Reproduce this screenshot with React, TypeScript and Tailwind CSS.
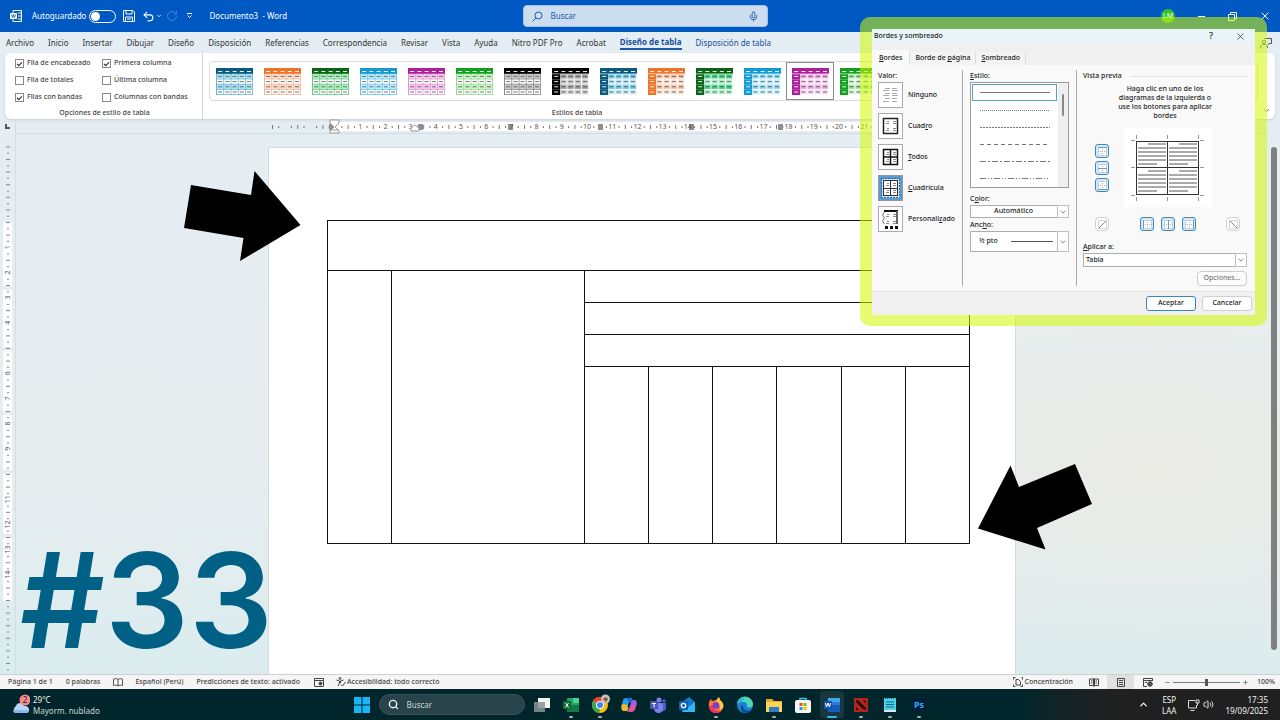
import type { ReactNode } from "react";
import { ChevronDown, ChevronUp, Mic, Minus, Plus, RotateCw, Search, Undo2, Volume2, X } from "lucide-react";

/* ---------- data ---------- */

const ribbonTabs = [
  "Archivo",
  "Inicio",
  "Insertar",
  "Dibujar",
  "Diseño",
  "Disposición",
  "Referencias",
  "Correspondencia",
  "Revisar",
  "Vista",
  "Ayuda",
  "Nitro PDF Pro",
  "Acrobat",
  "Diseño de tabla",
  "Disposición de tabla",
];

const styleOptions = [
  { id: "header-row", label: "Fila de encabezado", on: true },
  { id: "first-col", label: "Primera columna", on: true },
  { id: "total-row", label: "Fila de totales", on: false },
  { id: "last-col", label: "Última columna", on: false },
  { id: "band-rows", label: "Filas con bandas", on: true },
  { id: "band-cols", label: "Columnas con bandas", on: false },
];

type TableStyle = {
  name: string;
  head: string;
  band: string;
  alt: string;
  line: string;
  side?: boolean;
  selected?: boolean;
};

const tableStyles: TableStyle[] = [
  { name: "Cuadrícula azul oscuro", head: "#0b5a7e", band: "#b5e3f2", alt: "#ffffff", line: "#62b8d4" },
  { name: "Cuadrícula naranja", head: "#f07427", band: "#fbe0d0", alt: "#ffffff", line: "#f3b592" },
  { name: "Cuadrícula verde oscuro", head: "#0a6414", band: "#b9f0c6", alt: "#ffffff", line: "#5fca80" },
  { name: "Cuadrícula celeste", head: "#129bd3", band: "#c5ecfa", alt: "#ffffff", line: "#63c6e8" },
  { name: "Cuadrícula magenta", head: "#ad1f98", band: "#f6cdef", alt: "#ffffff", line: "#e593d9" },
  { name: "Cuadrícula verde", head: "#10a01c", band: "#d3f4d1", alt: "#ffffff", line: "#8edb8d" },
  { name: "Cuadrícula negra", head: "#000000", band: "#cccccc", alt: "#ffffff", line: "#8a8a8a" },
  { name: "Oscura negra", head: "#000000", band: "#a6a6a6", alt: "#cfcfcf", line: "#ffffff", side: true },
  { name: "Oscura azul", head: "#0b5a7e", band: "#79cde8", alt: "#bfe6f3", line: "#ffffff", side: true },
  { name: "Oscura naranja", head: "#f07427", band: "#f8c5a8", alt: "#fbe2d5", line: "#ffffff", side: true },
  { name: "Oscura verde", head: "#0a6414", band: "#4fd88c", alt: "#b3efcd", line: "#ffffff", side: true },
  { name: "Oscura celeste", head: "#129bd3", band: "#93dcf7", alt: "#c9eefb", line: "#ffffff", side: true },
  { name: "Oscura magenta", head: "#ad1f98", band: "#eeb0e4", alt: "#f7d7f2", line: "#ffffff", side: true, selected: true },
  { name: "Oscura verde claro", head: "#10a01c", band: "#a5e6a3", alt: "#d2f2d1", line: "#ffffff", side: true },
];

const dashes = ["", "1 1", "2 1", "4 3", "6 2 2 2", "6 2 1 2 1 2"];

/* ---------- small drawings ---------- */

function TableThumb({ style }: { style: TableStyle }) {
  const rows = [0, 1, 2, 3, 4];
  return (
    <svg width="37" height="27" viewBox="0 0 37 27" aria-hidden="true">
      <rect width="37" height="27" fill={style.line} />
      {rows.map((r) =>
        rows.map((c) => {
          const header = r === 0 || (style.side && c === 0);
          const fill = header ? style.head : r % 2 ? style.band : style.alt;
          const x = 1 + c * 7.2;
          const y = r === 0 ? 0 : 1 + r * 5.2;
          return (
            <g key={`${r}-${c}`}>
              <rect
                x={header ? x - 1 : x}
                y={y}
                width={header ? 8.2 : 6.4}
                height={r === 0 ? 5.6 : header ? 5.2 : 4.4}
                fill={fill}
              />
              <rect
                x={x + 1.2}
                y={r === 0 ? 3 : y + 1.7}
                width="4"
                height="1"
                fill={header ? "#fff" : "#444"}
                fillOpacity={header ? 0.9 : 0.75}
              />
            </g>
          );
        }),
      )}
    </svg>
  );
}

function HorizontalRuler() {
  const cm = 25.2;
  const zero = 67;
  const numbers = Array.from({ length: 21 }, (_, i) => i + 1);
  const ticks = Array.from({ length: 104 }, (_, i) => i - 10);
  const stops = [64, 153, 243, 333, 424, 513];
  return (
    <svg className="block w-full overflow-visible" height="14" viewBox="0 0 748 14" aria-hidden="true">
      <rect x={zero} y="3" width="645" height="9" fill="#fff" />
      {ticks.map((t) => {
        if (t % 4 === 0) return null;
        const x = zero + (t * cm) / 4;
        const half = t % 2 === 0;
        return <rect key={t} x={x} y={half ? 6 : 7} width="1" height={half ? 4 : 2} fill="#777" />;
      })}
      {stops.map((x) => (
        <rect key={x} x={x - 3} y="5" width="5" height="6" fill="#8a9095" />
      ))}
      {numbers.map((n) => (
        <text key={n} x={zero + n * cm} y="10" textAnchor="middle" fontSize="7" fill="#555">
          {n}
        </text>
      ))}
      <path d="M62 1h9v3l-4 4 4 4v2h-9v-2l4-4-4-4zM62 11h9" fill="#fff" stroke="#999" />
      <path d="M143 12v-3l4-3 4 3v3z" fill="#fff" stroke="#999" />
    </svg>
  );
}

function VerticalRuler() {
  const cm = 25.2;
  const zero = 88;
  const ticks = Array.from({ length: 84 }, (_, i) => i - 12);
  const numbers = [1, 2, 3, 4, 6, 7, 8, 9, 11, 12, 13, 14];
  return (
    <svg className="block" width="15" height="541" viewBox="0 0 15 541" aria-hidden="true">
      <rect x="3" y={zero} width="9" height="379" fill="#fff" />
      {[152, 213, 277, 336, 400].map((y) => (
        <rect key={y} x="3" y={y} width="9" height="4" fill="#e9ecee" />
      ))}
      {ticks.map((t) => {
        if (t > 0 && t % 4 === 0 && numbers.includes(t / 4)) return null;
        const half = t % 2 === 0;
        return <rect key={t} x={half ? 6 : 7} y={zero + (t * cm) / 4} width={half ? 4 : 2} height="1" fill="#888" />;
      })}
      {numbers.map((n) => (
        <text
          key={n}
          transform={`translate(10 ${zero + n * cm}) rotate(-90)`}
          textAnchor="middle"
          fontSize="7"
          fill="#555"
        >
          {n}
        </text>
      ))}
    </svg>
  );
}

function PreviewDiagram() {
  const lines = [2, 6, 10, 14, 18, 22];
  const block = (x: number, y: number) =>
    lines.map((l, i) => (
      <rect
        key={`${x}-${y}-${l}`}
        x={i === 0 ? x + 10 : x}
        y={y + l}
        width={i === 0 ? 18 : i === 5 ? 19 : 28}
        height="2"
        fill="#aaa"
      />
    ));
  return (
    <svg width="88" height="79" viewBox="0 0 88 79" className="bg-white" aria-hidden="true" shapeRendering="crispEdges">
      {block(14, 13)}
      {block(45, 13)}
      {block(14, 40)}
      {block(45, 40)}
      <path d="M12.5 13v54M43.5 13v54M74.5 13v54M12 13.5h63M12 39.5h63M12 66.5h63" stroke="#333" fill="none" />
      <path
        d="M7 12.500h4M12.500 7v4M43.500 7v4M74.500 7v4M76 12.500h4M7 39.500h4M76 39.500h4M7 67.500h4M12.500 69v4M43.500 69v4M74.500 69v4M76 67.500h4"
        stroke="#999"
        fill="none"
      />
    </svg>
  );
}

function SettingIcon({ kind }: { kind: string }) {
  const bare = kind === "none";
  return (
    <svg width="19" height="20" viewBox="0 0 19 20" aria-hidden="true" shapeRendering="crispEdges">
      {kind === "grid" && (
        <rect x="0.500" y="0.500" width="18" height="19" fill="#cfe3f3" stroke="#2b6fae" strokeDasharray="2 1" />
      )}
      {!bare && <rect x="2" y="2" width="15" height="16" fill="#fff" />}
      <path
        d={
          bare
            ? "M4 3.500h5M11 3.500h5M2 5.500h6M11 5.500h6M4 8.500h5M11 8.500h5M2 10.500h6M11 10.500h6M4 13.500h5M11 13.500h5M2 16.500h6M11 16.500h5"
            : "M6 5.500h2M12 5.500h3M5 7.500h3M12 7.500h3M6 12.500h2M12 12.500h3M5 14.500h3M12 14.500h3"
        }
        stroke={bare ? "#aaa" : "#888"}
        fill="none"
      />
      {kind === "box" && <rect x="2.500" y="2.500" width="14" height="15" fill="none" stroke="#222" strokeWidth="1.500" shapeRendering="auto" />}
      {kind === "all" && (
        <path d="M2.500 2.500h14v15h-14zM9.500 2.500v15M2.500 10h14" fill="none" stroke="#111" strokeWidth="1.500" shapeRendering="auto" />
      )}
      {kind === "grid" && <path d="M2.500 2.500h14v15h-14zM9.500 2v16M2 10.500h15" fill="none" stroke="#333" />}
      {kind === "custom" && (
        <>
          <path d="M3 2h14" stroke="#111" strokeWidth="2" />
          <path d="M16 2v13" stroke="#666" strokeWidth="2" />
          <path d="M3.500 3l-2 3 2 3-2 3 2 3" stroke="#777" fill="none" shapeRendering="auto" />
          <path d="M4 18h13" stroke="#111" strokeWidth="3" strokeDasharray="3 2" />
        </>
      )}
    </svg>
  );
}

function BorderGlyph({ edge }: { edge: string }) {
  const strong: Record<string, string> = {
    top: "M2 2.500h9",
    middle: "M2 6.500h9",
    bottom: "M2 10.500h9",
    left: "M2.500 2v9",
    center: "M6.500 2v9",
    right: "M10.500 2v9",
    up: "M3 10L10 3",
    down: "M3 3L10 10",
  };
  const diagonal = edge === "up" || edge === "down";
  return (
    <svg width="13" height="13" viewBox="0 0 13 13" aria-hidden="true">
      <path
        d={diagonal ? "M2.500 2.500h8v8h-8z" : "M2.500 2.500h8v8h-8zM6.500 2v9M2 6.500h9"}
        fill="#fff"
        stroke="#9fb4c4"
        strokeDasharray="1 1"
      />
      <path d={strong[edge]} stroke={diagonal ? "#888" : "#6d9cbd"} fill="none" />
    </svg>
  );
}

/* ---------- window parts ---------- */

function TitleBar() {
  return (
    <header className="grid h-8 shrink-0 grid-cols-[1fr_auto_1fr] items-center bg-[#0058c3] pl-[10px] text-white">
      <div className="flex items-center">
        <svg width="12" height="12" viewBox="0 0 12 12" aria-label="Word">
          <path d="M3 .5h8.500v11H3z" fill="none" stroke="#fff" />
          <path d="M8 3h3M8 6h3M8 9h3" stroke="#fff" />
          <rect y="3" width="7" height="6" fill="#fff" />
          <path d="M1.500 4.500l1 3 1-3 1 3 1-3" stroke="#0058c3" fill="none" strokeWidth=".8" />
        </svg>
        <label htmlFor="autosave" className="ml-[10px] whitespace-nowrap text-[8px]">
          Autoguardado
        </label>
        <input
          id="autosave"
          type="checkbox"
          role="switch"
          className="ml-[3px] h-[13px] w-[27px] appearance-none rounded-full border border-white before:m-px before:block before:size-[9px] before:rounded-full before:bg-white"
        />
        <button aria-label="Guardar" className="ml-[7px]">
          <svg width="12" height="12" viewBox="0 0 12 12" fill="none" stroke="#fff">
            <path d="M.5.5h9.500l1.500 1.500v9.500H.5zM3 .5v3.500h6V.5M2.500 11.500V7h7v4.500M4 9h4" />
          </svg>
        </button>
        <button aria-label="Deshacer" className="ml-[7px] flex items-center gap-px">
          <Undo2 size={13} strokeWidth={2} />
          <ChevronDown size={6} strokeWidth={3} />
        </button>
        <button aria-label="Rehacer" className="ml-1 text-[#3f82d8]">
          <RotateCw size={12} />
        </button>
        <button aria-label="Personalizar" className="ml-2">
          <svg width="7" height="6" viewBox="0 0 7 6" fill="none" stroke="#fff">
            <path d="M1 .5h5M1.500 2.500l2 2 2-2" />
          </svg>
        </button>
        <span className="ml-4 whitespace-pre text-[8px]">Documento3  - Word</span>
      </div>
      <label className="flex h-[22px] w-[245px] items-center gap-2 rounded-sm border border-[#a9c3e6] bg-[#cdddf0] px-2 text-[#1d5aa8]">
        <svg width="11" height="11" viewBox="0 0 11 11" fill="none" stroke="currentColor">
          <circle cx="6.500" cy="4.500" r="3.500" />
          <path d="M4 7L.5 10.500" />
        </svg>
        <input
          aria-label="Buscar"
          placeholder="Buscar"
          className="min-w-0 flex-1 bg-transparent text-[8px] outline-none placeholder:text-[#1d5aa8]"
        />
        <Mic size={11} />
      </label>
      <div className="flex items-center justify-end pr-[9px]">
        <span className="grid size-[14px] place-items-center rounded-full bg-[#2fc12f] text-[7px]">LM</span>
        <button aria-label="Minimizar" className="ml-[21px]">
          <Minus size={11} />
        </button>
        <button aria-label="Restaurar" className="ml-5">
          <svg width="11" height="11" viewBox="0 0 11 11" fill="none" stroke="#fff">
            <path d="M1.500 3.500h6v6h-6zM3.500 3V1.500h6v6H8" />
          </svg>
        </button>
        <button aria-label="Cerrar" className="ml-[21px]">
          <X size={12} />
        </button>
      </div>
    </header>
  );
}

function RibbonTabs() {
  return (
    <nav className="flex h-[21px] shrink-0 items-center gap-[14px] whitespace-nowrap pl-[6px] pr-2 text-[8px] text-[#333]">
      {ribbonTabs.map((tab) => {
        if (tab === "Diseño de tabla")
          return (
            <button key={tab} className="border-b-2 border-[#1d57a6] font-bold leading-3 text-[#174f9f]">
              {tab}
            </button>
          );
        return (
          <button key={tab} className={tab === "Disposición de tabla" ? "text-[#174f9f]" : ""}>
            {tab}
          </button>
        );
      })}
      <svg width="12" height="11" viewBox="0 0 12 11" className="ml-auto" fill="none" stroke="#555">
        <circle cx="4" cy="5" r="1.700" />
        <path d="M.5 11c0-5 7-5 7 0M4 1.500h7.500v5H9L8 8" />
      </svg>
    </nav>
  );
}

function Ribbon() {
  return (
    <section className="mx-[5px] flex h-[66px] shrink-0 rounded-md bg-white text-[7px] font-medium text-[#444] shadow">
      <div className="flex w-[198px] shrink-0 flex-col justify-between border-r border-[#d5d5d5] pb-px pl-[10px] pt-[2px]">
        <div className="grid grid-cols-[87px_1fr]">
          {styleOptions.map((o) => (
            <label key={o.id} htmlFor={o.id} className="flex h-[17px] items-center gap-[3px] whitespace-nowrap">
              <input
                id={o.id}
                type="checkbox"
                defaultChecked={o.on}
                className="grid size-[9px] shrink-0 appearance-none place-items-center border border-[#888] bg-white text-[8px] leading-none checked:before:block checked:before:h-[3px] checked:before:w-[5px] checked:before:-rotate-45 checked:before:border-b checked:before:border-l checked:before:border-[#222]"
              />
              {o.label}
            </label>
          ))}
        </div>
        <p className="pr-2 text-center leading-[11px]">Opciones de estilo de tabla</p>
      </div>
      <div className="flex min-w-0 flex-1 flex-col justify-between pb-px pl-[6px] pt-2">
        <div className="flex h-10 overflow-hidden rounded-sm border border-[#dcdcdc]">
          {tableStyles.map((s) => (
            <button
              key={s.name}
              aria-label={s.name}
              className={
                s.selected
                  ? "grid w-12 shrink-0 place-items-center border border-[#8c8c8c]"
                  : "grid w-12 shrink-0 place-items-center"
              }
            >
              <TableThumb style={s} />
            </button>
          ))}
        </div>
        <p className="w-[736px] text-center leading-[11px]">Estilos de tabla</p>
      </div>
      <button aria-label="Contraer la cinta" className="self-end p-1 text-[#444]">
        <ChevronDown size={9} />
      </button>
    </section>
  );
}

function DocumentTable() {
  const cell = "border border-[#111]";
  return (
    <table className="w-full table-fixed border-collapse">
      <colgroup>
        <col className="w-[10%]" />
        <col className="w-[30%]" />
        <col span={6} className="w-[10%]" />
      </colgroup>
      <tbody>
        <tr className="h-[50px]">
          <td colSpan={8} className={cell} />
        </tr>
        <tr className="h-8">
          <td rowSpan={4} className={cell} />
          <td rowSpan={4} className={cell} />
          <td colSpan={6} className={cell} />
        </tr>
        <tr className="h-8">
          <td colSpan={6} className={cell} />
        </tr>
        <tr className="h-8">
          <td colSpan={6} className={cell} />
        </tr>
        <tr className="h-[177px]">
          {[1, 2, 3, 4, 5, 6].map((c) => (
            <td key={c} className={cell} />
          ))}
        </tr>
      </tbody>
    </table>
  );
}

function Workspace() {
  return (
    <main className="flex min-h-0 flex-1 overflow-hidden">
      <div className="w-4 shrink-0 border-r border-[#d3dde3]">
        <div className="flex h-[15px] items-center justify-center">
          <svg width="5" height="5" viewBox="0 0 5 5">
            <path d="M1 0v4h4" stroke="#555" strokeWidth="2" fill="none" />
          </svg>
        </div>
        <VerticalRuler />
      </div>
      <div className="min-w-0 flex-1">
        <div className="h-[15px] border-b border-[#d3dde3]">
          <div className="mx-auto w-[748px]">
            <HorizontalRuler />
          </div>
        </div>
        <article className="mx-auto mt-[13px] h-full w-[748px] border border-[#d5dcdf] bg-white pl-[58px] pt-[72px]">
          <div className="w-[643px]">
            <DocumentTable />
          </div>
        </article>
      </div>
      <div className="w-3 shrink-0 px-[3px] pb-6 pt-7">
        <div className="h-full rounded-full bg-[#808080]" />
      </div>
    </main>
  );
}

function StatusBar() {
  return (
    <footer className="flex h-[15px] shrink-0 items-center border-t border-[#d0d0d0] bg-[#f5f5f5] pl-2 pr-[5px] text-[7px] font-medium text-[#444]">
      <span>Página 1 de 1</span>
      <span className="ml-[13px]">0 palabras</span>
      <svg width="10" height="9" viewBox="0 0 10 9" className="ml-[13px]" fill="none" stroke="#555">
        <path d="M5 1.500C4 .5 2 .5.500 1v6.500C2 7 4 7 5 8c1-1 3-1 4.500-.5V1C8 .5 6 .5 5 1.500zV8" />
      </svg>
      <span className="ml-3">Español (Perú)</span>
      <span className="ml-[13px]">Predicciones de texto: activado</span>
      <svg width="10" height="9" viewBox="0 0 10 9" className="ml-[14px]" fill="none" stroke="#444">
        <path d="M.5.500h9v8h-9zM.500 2.500h9" />
        <circle cx="6.500" cy="5.500" r="1.500" fill="#444" />
      </svg>
      <svg width="10" height="10" viewBox="0 0 10 10" className="ml-3" fill="none" stroke="#444">
        <circle cx="4" cy="1.500" r="1" />
        <path d="M.500 3l3 1v2l-1.500 3M7.500 3l-3 1v2M5 7.500l1.500 1.500 3-4" />
      </svg>
      <span className="ml-px">Accesibilidad: todo correcto</span>

      <button className="ml-auto flex items-center gap-[2px]">
        <svg width="10" height="10" viewBox="0 0 10 10" fill="none" stroke="#444">
          <path d="M.500 2.500v-2h2M.500 7.500v2h2M9.500 7.500v2h-2M9.500 2.500v-2h-1M3 2.500h2.500l2 2v3.500H3z" />
        </svg>
        Concentración
      </button>
      <button aria-label="Modo lectura" className="ml-[10px] grid h-[14px] w-[22px] place-items-center">
        <svg width="10" height="9" viewBox="0 0 10 9" fill="none" stroke="#444">
          <path d="M.500 1h4v6.500h-4zM5.500 1h4v6.500h-4zM2 3h1.500M2 5h1.500M6.500 3H8M6.500 5H8M5 0v9" />
        </svg>
      </button>
      <button aria-label="Diseño de impresión" className="ml-[2px] grid h-[14px] w-[27px] place-items-center bg-[#e0e0e0]">
        <svg width="8" height="9" viewBox="0 0 8 9" fill="none" stroke="#444">
          <path d="M.500.500h7v8h-7zM2 2.500h4M2 4.500h4M2 6.500h4" />
        </svg>
      </button>
      <button aria-label="Diseño web" className="grid h-[14px] w-[27px] place-items-center">
        <svg width="10" height="9" viewBox="0 0 10 9" fill="none" stroke="#444">
          <path d="M4 8.500H.500v-8h9V3M.500 2.500h9M2 4.500h2" />
          <circle cx="7" cy="6" r="2.300" fill="#555" />
        </svg>
      </button>
      <button aria-label="Alejar" className="ml-[3px] text-[#555]">
        <Minus size={7} />
      </button>
      <input
        type="range"
        aria-label="Zoom"
        defaultValue={50}
        className="mx-[2px] h-px w-[67px] appearance-none bg-[#777] [&::-webkit-slider-thumb]:h-[7px] [&::-webkit-slider-thumb]:w-[3px] [&::-webkit-slider-thumb]:appearance-none [&::-webkit-slider-thumb]:bg-[#555]"
      />
      <button aria-label="Acercar" className="text-[#555]">
        <Plus size={7} />
      </button>
      <span className="ml-2">100%</span>
    </footer>
  );
}

/* ---------- taskbar ---------- */

type TaskApp = { name: string; mark?: "dot" | "active"; art: ReactNode };

const apps: TaskApp[] = [
  {
    name: "Vista de tareas",
    art: (
      <>
        <rect x="4" y="1" width="12" height="10" fill="#f4f4f4" />
        <rect x="0" y="5" width="11" height="10" fill="#8a9496" fillOpacity=".85" />
      </>
    ),
  },
  {
    name: "Excel",
    mark: "dot",
    art: (
      <>
        <rect x="4" y="1" width="12" height="14" rx="1" fill="#21a366" />
        <path d="M10 1h6v5h-6z" fill="#4fd08c" />
        <path d="M4 8h12v7H4z" fill="#107c41" />
        <rect x="0" y="4" width="8" height="8" rx="1" fill="#0e6b38" />
        <path d="M2.500 6l3 4.500M5.500 6l-3 4.500" stroke="#fff" />
      </>
    ),
  },
  {
    name: "Chrome",
    mark: "dot",
    art: (
      <>
        <circle cx="8" cy="8" r="8" fill="#fbbc05" />
        <path d="M8 8L1 4a8 8 0 0 1 14 0z" fill="#ea4335" />
        <path d="M8 8L1 4a8 8 0 0 0 6.500 12z" fill="#34a853" />
        <circle cx="8" cy="8" r="4" fill="#fff" />
        <circle cx="8" cy="8" r="3" fill="#4285f4" />
        <circle cx="13.500" cy="2" r="4.500" fill="#c9c1b5" />
        <path d="M11 2c1-2 4-2 5 0l-2 3z" fill="#7b5a4c" />
      </>
    ),
  },
  {
    name: "Copilot",
    art: (
      <>
        <path d="M5 1h6l-4 13H3c-3 0-3-4-2-7 1-3 1-6 4-6z" fill="#2a9df4" />
        <path d="M1 7c-1 3-1 7 2 7h3l2-6z" fill="#f2b632" />
        <path d="M11 3h2c3 0 3 4 2 6.500S14 15 10 15H5c2 0 3-1 3-3z" fill="#e8529a" />
        <path d="M11 3h2c3 0 3 3 2 6h-5z" fill="#a85be8" />
        <path d="M5 1h5l2 2-1 2H8z" fill="#1c67d8" />
        <path d="M8 5l1.500 1L8 11l-1.500-1z" fill="#00262b" />
      </>
    ),
  },
  {
    name: "Teams",
    art: (
      <>
        <circle cx="9" cy="3" r="2.500" fill="#7b83eb" />
        <circle cx="14" cy="4" r="1.700" fill="#5059c9" />
        <path d="M11 6h5v5a3 3 0 0 1-4 3z" fill="#5059c9" />
        <path d="M4 6h9v6a4.500 4 0 0 1-9 0z" fill="#7b83eb" />
        <rect x="0" y="4" width="8" height="8" rx="1" fill="#4b53bc" />
        <path d="M2 6.500h4M4 6.500v4" stroke="#fff" />
      </>
    ),
  },
  {
    name: "Outlook",
    art: (
      <>
        <path d="M3 5l7-5 6 5v9a1 1 0 0 1-1 1H3z" fill="#1279cf" />
        <path d="M16 5v9a1 1 0 0 1-1 1H3z" fill="#35b8f1" />
        <rect x="0" y="4" width="9" height="9" rx="1" fill="#0a5fb4" />
        <circle cx="4.500" cy="8.500" r="2.200" fill="none" stroke="#fff" strokeWidth="1.300" />
      </>
    ),
  },
  {
    name: "Firefox",
    mark: "dot",
    art: (
      <>
        <path d="M1 5l2-3 1 2 4-1 3-3 1 3c3 2 4 5 3 8-1 3-4 5-7 5-5 0-8-4-7-11z" fill="#ff7139" />
        <path d="M11 0l1 3c3 2 4 5 3 8l-3 2c1-4-2-8-4-9z" fill="#ffc93c" />
        <path d="M1 10c1 4 4 6 7 6 2 0 4-1 5-2-5 1-8-2-8-6z" fill="#ef2f68" />
        <circle cx="8" cy="8.500" r="3.300" fill="#7543c9" />
      </>
    ),
  },
  {
    name: "Edge",
    art: (
      <>
        <circle cx="8" cy="8" r="8" fill="#1b7fd4" />
        <path d="M0 8a8 8 0 0 1 16-1c0 3-3 4-6 3 1-3-1-5-4-5-3 0-6 1-6 3z" fill="#4fd8b4" />
        <path d="M0 8c0-4 3-7 8-8L5 5C2 5 0 6 0 8z" fill="#2bb6e8" />
        <path d="M6 8c-1 4 4 7 8 5-2 3-6 3-8 2-3-2-3-6 0-7z" fill="#0c4a94" />
      </>
    ),
  },
  {
    name: "Explorador",
    mark: "dot",
    art: (
      <>
        <path d="M0 2h6l2 2h8v11H0z" fill="#e9a825" />
        <path d="M0 5h16v10H0z" fill="#fdd35a" />
        <path d="M3 10h10v5H3z" fill="#2c7cc9" />
      </>
    ),
  },
  {
    name: "Store",
    art: (
      <>
        <path d="M5 4V1.500h6V4" stroke="#3fc0e8" strokeWidth="1.500" fill="none" />
        <rect x="0" y="3" width="16" height="13" rx="2" fill="#f5f5f5" />
        <path d="M4.500 6h3v3h-3z" fill="#f25022" />
        <path d="M8.500 6h3v3h-3z" fill="#7fba00" />
        <path d="M4.500 10h3v3h-3z" fill="#00a4ef" />
        <path d="M8.500 10h3v3h-3z" fill="#ffb900" />
      </>
    ),
  },
  {
    name: "Word",
    mark: "active",
    art: (
      <>
        <path d="M4 1h12v5H4z" fill="#41a5ee" />
        <path d="M4 5h12v4H4z" fill="#2b7cd3" />
        <path d="M4 8h12v7H4z" fill="#185abd" />
        <rect x="0" y="4" width="8" height="8" rx="1" fill="#1552b0" />
        <path d="M1.500 6l1 4 1.500-4 1.500 4 1-4" stroke="#fff" fill="none" />
      </>
    ),
  },
  {
    name: "Dota 2",
    mark: "dot",
    art: (
      <>
        <path d="M1 1h14v14H1z" fill="#b3241c" />
        <path d="M3 3l3 1 7 7v2l-3-1-7-7zM10 3l3 1-1 2zM3 10l3 3H3z" fill="#210b0b" />
      </>
    ),
  },
  {
    name: "Bloc de notas",
    mark: "dot",
    art: (
      <>
        <path d="M2 1h12v14H2z" fill="#4ed0e8" />
        <path d="M2 13h12v2H2z" fill="#d7e9ee" />
        <path d="M4 5h8M4 7.500h8M4 10h8" stroke="#0d6b86" />
        <path d="M3 1.500h10" stroke="#0d6b86" strokeDasharray="1 1" />
      </>
    ),
  },
  {
    name: "Photoshop",
    mark: "dot",
    art: (
      <>
        <rect x="1" y="1" width="14" height="14" rx="2" fill="#001e36" />
        <text x="8" y="11" textAnchor="middle" fontSize="9" fontWeight="700" fill="#31a8ff">
          Ps
        </text>
      </>
    ),
  },
];

function Taskbar() {
  return (
    <footer className="grid h-[31px] shrink-0 grid-cols-[1fr_auto_1fr] items-center bg-linear-to-r from-[#00262b] from-80% to-[#202020] to-87% px-3 text-[8px] text-[#f2f2f2]">
      <button className="flex items-center gap-[3px] justify-self-start text-left">
        <svg width="18" height="21" viewBox="0 0 18 21" aria-hidden="true">
          <path d="M4 19a4 4 0 0 1 0-7c1-4 7-4 8 0 5-1 7 5 3 7z" fill="#b9d4f5" />
          <path d="M1 16h16c0 2-1 3-2 3H4c-2 0-3-1-3-3z" fill="#8db4ec" />
          <circle cx="13" cy="6" r="5.500" fill="#f58a8a" />
          <text x="13" y="9" textAnchor="middle" fontSize="8" fill="#222">
            2
          </text>
        </svg>
        <span className="leading-[11px]">
          29°C
          <br />
          <span className="text-[#cfd6d6]">Mayorm. nublado</span>
        </span>
      </button>
      <div className="flex items-center gap-[5px]">
        <button aria-label="Inicio" className="grid size-6 place-items-center">
          <svg width="16" height="16" viewBox="0 0 16 16" fill="#19b5f5">
            <path d="M0 0h7.500v7.500H0zM8.500 0H16v7.500H8.500zM0 8.500h7.500V16H0zM8.500 8.500H16V16H8.500z" />
          </svg>
        </button>
        <label className="flex h-[21px] w-[146px] items-center gap-2 rounded-full border border-[#3c5357] bg-[#26444a] px-2">
          <Search size={11} strokeWidth={3} />
          <input
            aria-label="Buscar en Windows"
            placeholder="Buscar"
            className="min-w-0 flex-1 bg-transparent text-[8px] outline-none placeholder:text-[#cfd8d8]"
          />
        </label>
        {apps.map((app) => (
          <button
            key={app.name}
            aria-label={app.name}
            className={
              app.mark === "active"
                ? "flex h-[27px] w-6 flex-col items-center justify-end gap-[3px] rounded-sm bg-[#15393e]"
                : "flex h-[27px] w-6 flex-col items-center justify-end gap-[3px]"
            }
          >
            <svg width="16" height="16" viewBox="0 0 16 16" className="overflow-visible">
              {app.art}
            </svg>
            <span
              className={
                app.mark === "active"
                  ? "h-[2px] w-[10px] rounded-full bg-[#3bb4ea]"
                  : app.mark === "dot"
                    ? "h-[2px] w-1 rounded-full bg-[#a5b0b1]"
                    : "h-[2px] w-1"
              }
            />
          </button>
        ))}
      </div>
      <div className="flex items-center justify-end">
        <ChevronUp size={11} strokeWidth={3} />
        <span className="ml-[13px] text-center leading-[11px]">
          ESP
          <br />
          LAA
        </span>
        <svg width="12" height="12" viewBox="0 0 12 12" className="ml-3" fill="none" stroke="#ddd">
          <path d="M7 1.500H.500v7.500h8V6M2.500 11.500h4M8 1h3v3H8zM9.500 4v2.500" />
        </svg>
        <Volume2 size={11} className="ml-[3px]" />
        <span className="ml-[11px] text-right leading-[11px]">
          17:35
          <br />
          19/09/2025
        </span>
      </div>
    </footer>
  );
}

/* ---------- borders dialog ---------- */

const settings: { kind: string; label: ReactNode }[] = [
  { kind: "none", label: <>Nin<u>g</u>uno</> },
  { kind: "box", label: <>Cuad<u>r</u>o</> },
  { kind: "all", label: <><u>T</u>odos</> },
  { kind: "grid", label: <><u>C</u>uadrícula</> },
  { kind: "custom", label: <>Personali<u>z</u>ado</> },
];

function EdgeButton({ edge, plain }: { edge: string; plain?: boolean }) {
  return (
    <button
      aria-label={`Borde ${edge}`}
      className={
        plain
          ? "grid size-[14px] place-items-center rounded-sm border border-[#d0d0d0] bg-[#fdfdfd]"
          : "grid size-[14px] place-items-center rounded-[3px] border border-[#3d87ba] bg-[#d5e9f7]"
      }
    >
      <BorderGlyph edge={edge} />
    </button>
  );
}

function SelectArrow() {
  return (
    <span className="pointer-events-none absolute inset-y-0 right-0 grid w-3 place-items-center border border-[#c0c0c0] bg-white text-[#555]">
      <ChevronDown size={8} />
    </span>
  );
}

function BordersDialog() {
  const select = "w-full appearance-none rounded-none border border-[#adadad] bg-white text-[7px] text-[#222]";
  return (
    <div className="absolute right-[13px] top-[17px] rounded-[10px] bg-[#d3fa00]/55 px-3 pb-[11px] pt-3">
      <div role="dialog" aria-label="Bordes y sombreado" className="w-[383px] bg-[#f0f0f0] text-[7px] font-medium text-[#222]">
        <div className="flex h-[14px] items-center bg-[#e8f4f8] pl-[2px] pr-[9px]">
          <span>Bordes y sombreado</span>
          <button aria-label="Ayuda" className="ml-auto text-[9px]">
            ?
          </button>
          <button aria-label="Cerrar" className="ml-[22px]">
            <X size={11} strokeWidth={1.5} />
          </button>
        </div>
        <div role="tablist" className="flex h-[22px] items-end">
          <button role="tab" aria-selected="true" className="h-[15px] bg-[#f9f9f9] px-[7px] pt-[2px]">
            <u>B</u>ordes
          </button>
          <button role="tab" className="h-[13px] border-l border-[#ddd] bg-[#f3f3f3] px-[5px]">
            Borde de <u>p</u>ágina
          </button>
          <button role="tab" className="h-[13px] border-x border-[#ddd] bg-[#f3f3f3] px-[5px]">
            <u>S</u>ombreado
          </button>
        </div>

        <div className="grid h-[226px] grid-cols-[91px_114px_1fr] bg-[#f9f9f9] py-[5px]">
          <div className="border-r border-[#aaa] pl-[6px]">
            <p className="leading-[12px]">Valor:</p>
            <div className="flex flex-col gap-[5px]">
              {settings.map((s) => (
                <button key={s.kind} className="flex items-center gap-[5px] whitespace-nowrap">
                  <span
                    className={
                      s.kind === "grid"
                        ? "grid h-[26px] w-[25px] shrink-0 place-items-center border border-[#999] bg-[#5b9bd0]"
                        : "grid h-[26px] w-[25px] shrink-0 place-items-center border border-[#aaa] bg-white"
                    }
                  >
                    <SettingIcon kind={s.kind} />
                  </span>
                  <span>{s.label}</span>
                </button>
              ))}
            </div>
          </div>

          <div className="border-r border-[#aaa] px-[7px]">
            <p className="leading-[12px]">
              <u>E</u>stilo:
            </p>
            <div className="flex h-[106px] border border-[#9a9a9a] bg-white">
              <div role="listbox" aria-label="Estilo" className="flex-1">
                {dashes.map((d, i) => (
                  <button
                    role="option"
                    aria-selected={i === 0}
                    aria-label={`Línea ${i + 1}`}
                    key={d}
                    className={
                      i === 0
                        ? "m-px grid h-[17px] w-[85px] place-items-center border border-[#5b9fc5]"
                        : "m-px grid h-4 w-[85px] place-items-center"
                    }
                  >
                    <svg width="70" height="1">
                      <path d="M0 .5h70" stroke="#777" strokeDasharray={d} />
                    </svg>
                  </button>
                ))}
              </div>
              <div className="w-[11px] bg-[#efefef] pl-1 pt-[11px]">
                <div className="h-[22px] w-[2px] rounded-full bg-[#888]" />
              </div>
            </div>
            <label htmlFor="color" className="mt-1 block leading-[13px]">
              C<u>o</u>lor:
            </label>
            <div className="relative">
              <select id="color" className={`${select} block h-[13px] pr-3 text-center`}>
                <option>Automático</option>
              </select>
              <SelectArrow />
            </div>
            <label htmlFor="width" className="block leading-[13px]">
              Anc<u>h</u>o:
            </label>
            <div className="relative">
              <select id="width" className={`${select} block h-[21px] pl-2`}>
                <option>½ pto</option>
              </select>
              <span className="pointer-events-none absolute left-[41px] right-4 top-[10px] h-px bg-[#555]" />
              <SelectArrow />
            </div>
          </div>

          <div className="pl-[6px] pr-2">
            <div className="flex items-center gap-2">
              <p className="leading-[12px]">Vista previa</p>
              <span className="h-px flex-1 bg-[#e3e3e3]" />
            </div>
            <p className="mx-auto mt-[2px] w-[100px] text-center leading-[9px]">
              Haga clic en uno de los diagramas de la izquierda o use los botones para aplicar bordes
            </p>
            <div className="mt-2 flex items-center gap-[15px] pl-3">
              <div className="flex flex-col gap-[3px]">
                <EdgeButton edge="top" />
                <EdgeButton edge="middle" />
                <EdgeButton edge="bottom" />
              </div>
              <PreviewDiagram />
            </div>
            <div className="mt-[10px] flex items-center justify-between pl-3 pr-[7px]">
              <EdgeButton edge="up" plain />
              <div className="flex gap-[7px]">
                <EdgeButton edge="left" />
                <EdgeButton edge="center" />
                <EdgeButton edge="right" />
              </div>
              <EdgeButton edge="down" plain />
            </div>
            <label htmlFor="apply" className="mt-[10px] block leading-[12px]">
              <u>A</u>plicar a:
            </label>
            <div className="relative">
              <select id="apply" className={`${select} block h-[14px] pl-[2px]`}>
                <option>Tabla</option>
              </select>
              <SelectArrow />
            </div>
            <button className="ml-auto mt-1 block h-[15px] w-[50px] rounded-sm border border-[#ccc] bg-[#fcfcfc] text-[#777]">
              Opciones...
            </button>
          </div>
        </div>

        <div className="flex h-6 items-center justify-end gap-[6px] border-t border-[#e5e5e5] pr-[3px]">
          <button className="h-[15px] w-[50px] rounded-[3px] border border-[#3a86c0] bg-white">Aceptar</button>
          <button className="h-[15px] w-[50px] rounded-[3px] border border-[#d0d0d0] bg-white">Cancelar</button>
        </div>
      </div>
    </div>
  );
}

export default function App() {
  return (
    <div className="relative flex h-screen flex-col overflow-hidden bg-[radial-gradient(ellipse_at_90%_65%,#ebebe6_0%,transparent_35%),radial-gradient(ellipse_at_10%_60%,#e7ecee_0%,transparent_35%),linear-gradient(180deg,#e4edf3_0%,#e6eef1_55%,#d8ecee_100%)] font-['Noto_Sans','Open_Sans',sans-serif]">
      <TitleBar />
      <RibbonTabs />
      <Ribbon />
      <Workspace />
      <StatusBar />
      <Taskbar />

      <svg className="absolute left-[184px] top-[171px]" width="117" height="91" viewBox="184 171 117 91" aria-hidden="true">
        <path d="M191 185L251 195L254.500 171L300.500 225L240 261L243.500 238L184 228z" />
      </svg>
      <svg className="absolute left-[977px] top-[463px]" width="116" height="88" viewBox="977 463 116 88" aria-hidden="true">
        <path d="M1075 464L1092 504L1037 528L1045.500 549.500L978 528.500L1010.500 465.500L1019 487z" />
      </svg>
      <p className="absolute bottom-[56px] left-5 font-['Inter',sans-serif] text-[132px] font-semibold leading-[128px] text-[#006085]">
        #33
      </p>
      <BordersDialog />
    </div>
  );
}
